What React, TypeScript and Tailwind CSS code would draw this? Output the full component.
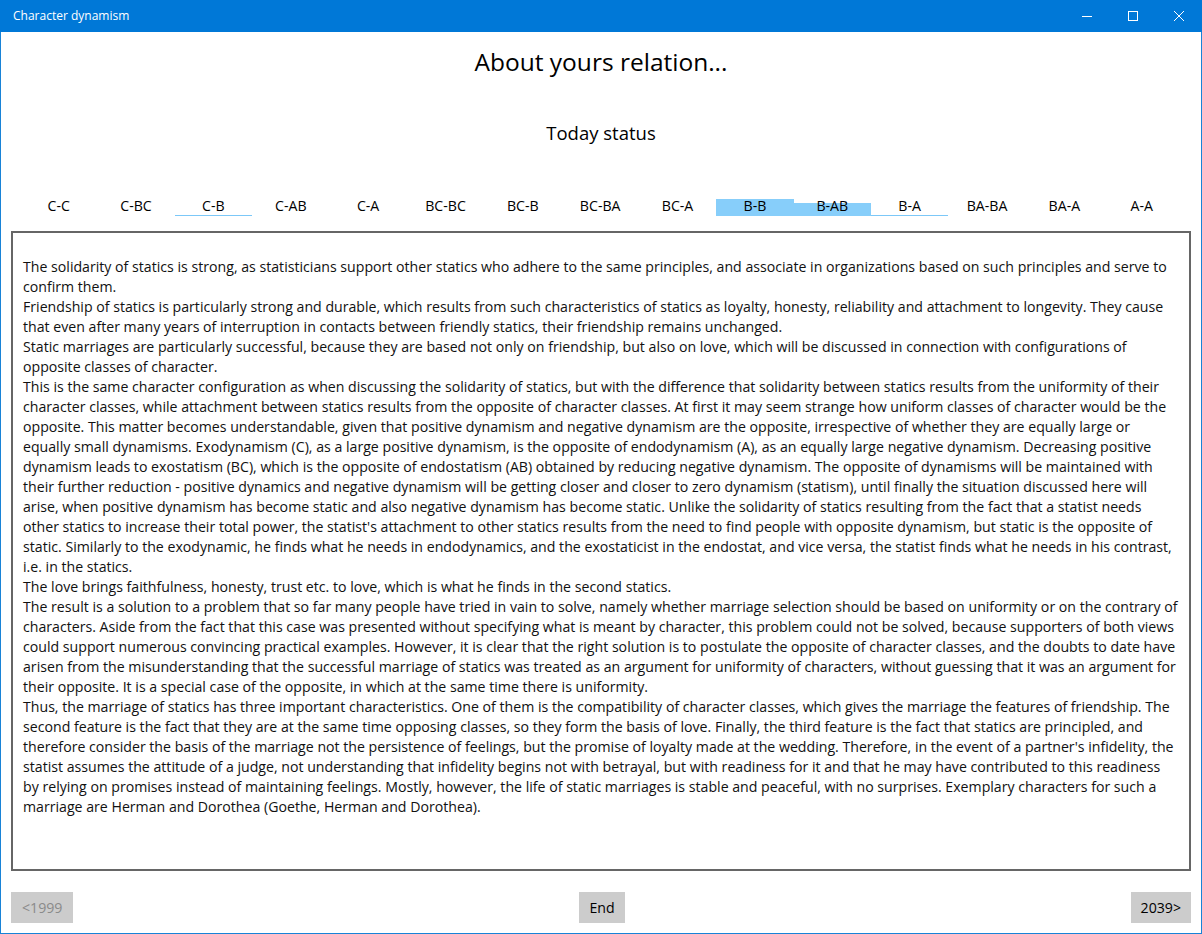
import React from 'react'

const tabs = ['C-C', 'C-BC', 'C-B', 'C-AB', 'C-A', 'BC-BC', 'BC-B', 'BC-BA', 'BC-A', 'B-B', 'B-AB', 'B-A', 'BA-BA', 'BA-A', 'A-A']

// lines kept as in the original text box wrapping
const paragraphs: string[][] = [
  [
    'The solidarity of statics is strong, as statisticians support other statics who adhere to the same principles, and associate in organizations based on such principles and serve to',
    'confirm them.',
  ],
  [
    'Friendship of statics is particularly strong and durable, which results from such characteristics of statics as loyalty, honesty, reliability and attachment to longevity. They cause',
    'that even after many years of interruption in contacts between friendly statics, their friendship remains unchanged.',
  ],
  [
    'Static marriages are particularly successful, because they are based not only on friendship, but also on love, which will be discussed in connection with configurations of',
    'opposite classes of character.',
  ],
  [
    'This is the same character configuration as when discussing the solidarity of statics, but with the difference that solidarity between statics results from the uniformity of their',
    'character classes, while attachment between statics results from the opposite of character classes. At first it may seem strange how uniform classes of character would be the',
    'opposite. This matter becomes understandable, given that positive dynamism and negative dynamism are the opposite, irrespective of whether they are equally large or',
    'equally small dynamisms. Exodynamism (C), as a large positive dynamism, is the opposite of endodynamism (A), as an equally large negative dynamism. Decreasing positive',
    'dynamism leads to exostatism (BC), which is the opposite of endostatism (AB) obtained by reducing negative dynamism. The opposite of dynamisms will be maintained with',
    'their further reduction - positive dynamics and negative dynamism will be getting closer and closer to zero dynamism (statism), until finally the situation discussed here will',
    'arise, when positive dynamism has become static and also negative dynamism has become static. Unlike the solidarity of statics resulting from the fact that a statist needs',
    "other statics to increase their total power, the statist's attachment to other statics results from the need to find people with opposite dynamism, but static is the opposite of",
    'static. Similarly to the exodynamic, he finds what he needs in endodynamics, and the exostaticist in the endostat, and vice versa, the statist finds what he needs in his contrast,',
    'i.e. in the statics.',
  ],
  ['The love brings faithfulness, honesty, trust etc. to love, which is what he finds in the second statics.'],
  [
    'The result is a solution to a problem that so far many people have tried in vain to solve, namely whether marriage selection should be based on uniformity or on the contrary of',
    'characters. Aside from the fact that this case was presented without specifying what is meant by character, this problem could not be solved, because supporters of both views',
    'could support numerous convincing practical examples. However, it is clear that the right solution is to postulate the opposite of character classes, and the doubts to date have',
    'arisen from the misunderstanding that the successful marriage of statics was treated as an argument for uniformity of characters, without guessing that it was an argument for',
    'their opposite. It is a special case of the opposite, in which at the same time there is uniformity.',
  ],
  [
    'Thus, the marriage of statics has three important characteristics. One of them is the compatibility of character classes, which gives the marriage the features of friendship. The',
    'second feature is the fact that they are at the same time opposing classes, so they form the basis of love. Finally, the third feature is the fact that statics are principled, and',
    "therefore consider the basis of the marriage not the persistence of feelings, but the promise of loyalty made at the wedding. Therefore, in the event of a partner's infidelity, the",
    'statist assumes the attitude of a judge, not understanding that infidelity begins not with betrayal, but with readiness for it and that he may have contributed to this readiness',
    'by relying on promises instead of maintaining feelings. Mostly, however, the life of static marriages is stable and peaceful, with no surprises. Exemplary characters for such a',
    'marriage are Herman and Dorothea (Goethe, Herman and Dorothea).',
  ],
]

function TitleBar() {
  return (
    <div className="h-8 bg-[#0078d7] flex items-center text-white">
      <span className="pl-[13px] text-[12px] flex-1">Character dynamism</span>
      <div className="flex h-full">
        <div className="w-[46px] h-full flex items-center justify-center">
          <div className="w-[10px] h-px bg-white" />
        </div>
        <div className="w-[46px] h-full flex items-center justify-center">
          <div className="w-[10px] h-[10px] border border-white" />
        </div>
        <div className="w-[46px] h-full flex items-center justify-center">
          <svg width="10" height="10" viewBox="0 0 10 10">
            <path d="M0 0L10 10M10 0L0 10" stroke="white" strokeWidth="1" />
          </svg>
        </div>
      </div>
    </div>
  )
}

function Tab({ label, index }: { label: string; index: number }) {
  const underline = index === 2 || index === 11
  return (
    <div className="w-[77.36px] h-[19px] flex items-end justify-center relative">
      {index === 9 && <div className="absolute inset-x-0 bottom-0 h-[17px] bg-[#87cefa]" />}
      {index === 10 && <div className="absolute inset-x-0 bottom-0 h-[13px] bg-[#87cefa]" />}
      {underline && <div className="absolute inset-x-0 bottom-0 h-[1px] bg-[#7cc8f8]" />}
      <span className="relative leading-[19px] pb-[1px]">{label}</span>
    </div>
  )
}

export default function App() {
  return (
    <div
      className="w-[1202px] h-[934px] bg-white flex flex-col text-[#111]"
      style={{ fontFamily: '"Open Sans", "Noto Sans", sans-serif' }}
    >
      <TitleBar />
      <div className="flex-1 flex flex-col border-x border-b border-[#1883d7] px-[10px]">
        <div className="text-center text-[24.5px] leading-[32px] mt-[14px] text-black">About yours relation...</div>
        <div className="text-center text-[18.5px] leading-[26px] mt-[42px] text-black">Today status</div>
        <div className="flex pl-[9px] mt-[51px] text-[14.15px] text-black">
          {tabs.map((t, i) => (
            <Tab key={t} label={t} index={i} />
          ))}
        </div>
        <div className="mt-[15px] h-[640px] border-2 border-[#666] pt-[24px] pl-[10px] text-[14.15px] leading-[20px] overflow-hidden">
          {paragraphs.map((p, i) => (
            <div key={i}>
              {p.map((line, j) => (
                <div key={j} className="whitespace-nowrap">{line}</div>
              ))}
            </div>
          ))}
        </div>
        <div className="flex items-center justify-between mt-[21px] text-[14.15px]">
          <button className="h-[31px] px-[11px] bg-[#cccccc] text-[#8a8a8a]">&lt;1999</button>
          <button className="h-[31px] px-[10px] bg-[#cccccc] text-black">End</button>
          <button className="h-[31px] px-[10px] bg-[#cccccc] text-black">2039&gt;</button>
        </div>
      </div>
    </div>
  )
}
